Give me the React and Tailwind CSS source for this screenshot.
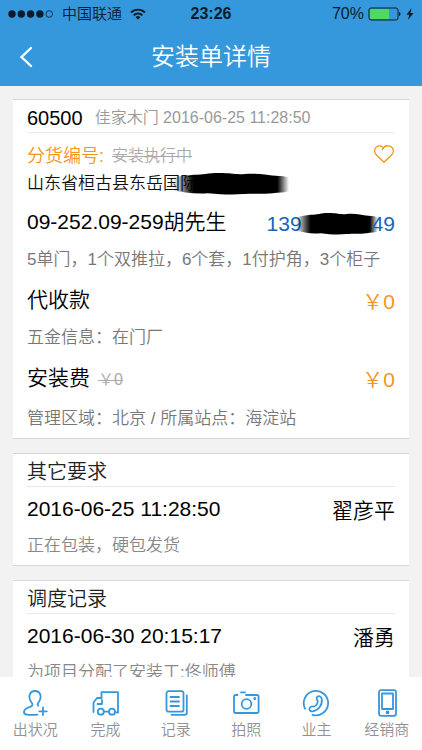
import { useState } from "react";

const ORDER = {
  id: "60500",
  brand: "佳家木门",
  createdAt: "2016-06-25 11:28:50",
  status: "安装执行中",
  address: "山东省桓古县东岳国际",
  customer: "09-252.09-259胡先生",
  phone: ["139", "49"],
  goods: "5单门，1个双推拉，6个套，1付护角，3个柜子",
};

const RECORDS = [
  { title: "其它要求", time: "2016-06-25 11:28:50", person: "翟彦平", text: "正在包装，硬包发货" },
  { title: "调度记录", time: "2016-06-30 20:15:17", person: "潘勇", text: "为项目分配了安装工:佟师傅" },
];

const TABS = [
  { id: "issue",  label: "出状况", icon: UserPlusIcon },
  { id: "done",   label: "完成",   icon: TruckIcon    },
  { id: "log",    label: "记录",   icon: NotesIcon    },
  { id: "photo",  label: "拍照",   icon: CameraIcon   },
  { id: "owner",  label: "业主",   icon: PhoneIcon    },
  { id: "dealer", label: "经销商", icon: MobileIcon   },
];

function Icon({ children }) {
  return (
    <svg
      viewBox="0 0 28 28"
      className="w-7 h-7"
      fill="none"
      stroke="currentColor"
      strokeWidth="1.8"
      strokeLinecap="round"
      strokeLinejoin="round"
      aria-hidden="true"
    >
      {children}
    </svg>
  );
}

function UserPlusIcon() {
  return (
    <Icon>
      <path d="M17.3 16.6c-.9-.7-.9-1.7 0-2.9 2-2.6 2.9-5.700 1.900-8.300C18.300 3 16.300 2 14 2s-4.300 1-5.200 3.400c-1 2.600-.1 5.700 1.900 8.300 1.300 1.700 1 3.100-1 3.900l-3.500 1.400C4 20 3 21.300 3 23.300c0 1.500 1 2.200 3 2.400 3 .3 7 .3 10.500 0" />
      <path d="M22 18.500v7.500M18.300 22.300h7.500" />
    </Icon>
  );
}

function TruckIcon() {
  return (
    <Icon>
      <path d="M2.500 23v-9.500L6 9h4.500V3.200h16.500v20.300H25.500M11 11v4H6.500" />
      <circle cx="9.800" cy="22.700" r="3" />
      <circle cx="21" cy="22.700" r="3" />
      <path d="M13.500 22.700h3.700" />
    </Icon>
  );
}

function NotesIcon() {
  return (
    <Icon>
      <rect x="4.500" y="2.200" width="17" height="20.500" rx="2" />
      <path d="M24.800 6.500v17c0 1.500-.8 2.300-2.300 2.300H9.500M8.500 8h8.500M8.500 12.500h8.500M8.500 17h8.500" />
    </Icon>
  );
}

function CameraIcon() {
  return (
    <Icon>
      <path d="M5.500 6H3.800C2.600 6 2 6.600 2 7.800v14.400c0 1.200.6 1.800 1.800 1.800h21c1.200 0 1.800-.6 1.800-1.800V7.800c0-1.200-.6-1.800-1.800-1.800H14M9 3.400h4" />
      <circle cx="14.500" cy="15" r="4.800" />
      <circle cx="22.800" cy="9.500" r=".6" fill="currentColor" />
    </Icon>
  );
}

function PhoneIcon() {
  return (
    <Icon>
      <path d="M10.500 25.800A12.200 12.200 0 1 0 3 19.500" />
      <path d="M15.300 7.800c1.500-1.300 4.200-.3 4.500 2.200.7 6-3.300 11.200-9 12.300-2 .3-3.800-1-3.300-2.800.4-1.600 2.300-2.500 3.800-1.800 2.500-.3 4.600-3 4.500-5.900-1.300-.8-1.700-2.800-.5-4z" />
    </Icon>
  );
}

function MobileIcon() {
  return (
    <Icon>
      <rect x="6" y="1.200" width="17" height="25.600" rx="2" />
      <rect x="9" y="4.500" width="11" height="15.500" />
      <circle cx="14.500" cy="23.400" r="1" fill="currentColor" />
    </Icon>
  );
}

// Black marker stroke that hides private text
function Scribble({ id, className }) {
  return (
    <svg viewBox="0 0 100 24" preserveAspectRatio="none" className={className} aria-hidden="true">
      <defs>
        <linearGradient id={id}>
          <stop offset="0" stopOpacity="0" />
          <stop offset=".14" stopOpacity=".8" />
          <stop offset=".18" stopOpacity="1" />
          <stop offset=".9" stopOpacity="1" />
          <stop offset="1" stopOpacity="0" />
        </linearGradient>
      </defs>
      <path
        d="M0 5C6 3 12 3 18 2c8 0 12-2 22-2s14 2 22 1c9-1 18 1 26 2 6 0 10 1 12 2v15c-5 2-9 1-14 2-9 1-16 0-25 1-12 1-20 0-31-1-11 1-22-1-30-3z"
        fill={`url(#${id})`}
      />
    </svg>
  );
}

function StatusBar() {
  return (
    <div className="h-7 px-2 grid grid-cols-[1fr_auto_1fr] items-center text-base text-[#0b1c2b]">
      <div className="flex items-center gap-1">
        <svg viewBox="0 0 46 8" className="w-[46px] h-2" fill="currentColor" aria-hidden="true">
          <circle cx="4" cy="4" r="3.700" />
          <circle cx="13.300" cy="4" r="3.700" />
          <circle cx="22.600" cy="4" r="3.700" />
          <circle cx="31.900" cy="4" r="3.700" />
          <circle cx="41.200" cy="4" r="3.300" fill="none" stroke="currentColor" strokeWidth=".8" />
        </svg>
        <span className="ml-1 text-[15px]">中国联通</span>
        <svg viewBox="0 0 16 12" className="w-4 h-3 ml-1" fill="none" stroke="currentColor" strokeWidth="1.900" aria-hidden="true">
          <path d="M1 4.500a10 10 0 0 1 14 0M3.600 7.300a6.200 6.200 0 0 1 8.800 0" />
          <path d="M8 11.500L5.600 9.200a3.400 3.400 0 0 1 4.800 0z" fill="currentColor" stroke="none" />
        </svg>
      </div>
      <span className="font-bold">23:26</span>
      <div className="flex items-center justify-end gap-1">
        <span>70%</span>
        <svg viewBox="0 0 34 14" className="w-[34px] h-[14px]" aria-hidden="true">
          <rect x="1" y="1" width="29" height="12" rx="2" fill="none" stroke="currentColor" />
          <rect x="2" y="2" width="19" height="10" rx="1" fill="#4cd964" />
          <path d="M31 5c2 .3 2 3.700 0 4z" fill="currentColor" />
        </svg>
        <svg viewBox="0 0 8 12" className="w-2 h-3" fill="currentColor" aria-hidden="true">
          <path d="M5.500 0L.5 6.800h2.800L2 12l5.500-7H4.500z" />
        </svg>
      </div>
    </div>
  );
}

function Card({ children }) {
  return (
    <section className="shrink-0 bg-white border-y border-[#d8d8d8] px-3.5 flex flex-col">{children}</section>
  );
}

function FeeRow({ label, old }) {
  return (
    <div className="h-9 flex items-center justify-between">
      <h3 className="text-[21px] text-black">
        {label}
        {old && <del className="ml-2 text-base text-[#aaa]">{old}</del>}
      </h3>
      <span className="pt-1 text-[21px] text-[#f7941d]">￥0</span>
    </div>
  );
}

function RecordCard({ record }) {
  return (
    <Card>
      <h2 className="h-[33px] pt-1 flex items-center border-b border-[#e8e8e8] text-xl text-[#222]">{record.title}</h2>
      <div className="h-11 flex items-center justify-between text-[21px] text-black">
        <time>{record.time}</time>
        <span className="pt-1">{record.person}</span>
      </div>
      <p className="h-[34px] text-[17px] leading-[30px] text-[#888]">{record.text}</p>
    </Card>
  );
}

export default function App() {
  const [liked, setLiked] = useState(false);

  return (
    <div
      lang="zh-CN"
      className="h-screen flex flex-col overflow-hidden bg-[#f2f2f2] font-['Liberation_Sans','Noto_Sans_CJK_SC',sans-serif] font-[350]"
    >
      <header className="shrink-0 bg-[#3598dc]">
        <StatusBar />
        <div className="h-[58px] px-4 grid grid-cols-[1fr_auto_1fr] items-center text-white">
          <button aria-label="返回" className="w-5 h-8 flex items-center justify-center">
            <svg viewBox="0 0 14 22" className="w-3.5 h-[22px]" fill="none" stroke="currentColor" strokeWidth="2.400" strokeLinecap="round" aria-hidden="true">
              <path d="M12 2L2.500 11l9.500 9" />
            </svg>
          </button>
          <h1 className="text-2xl">安装单详情</h1>
        </div>
      </header>

      <main className="flex-1 min-h-0 overflow-y-auto [scrollbar-width:none] px-[13px] pt-[13px] flex flex-col gap-3.5">
        <Card>
          <div className="h-[33px] flex items-center gap-3 border-b border-[#ececec] pt-1">
            <h2 className="text-xl text-black">{ORDER.id}</h2>
            <p className="text-base text-[#999]">{ORDER.brand} {ORDER.createdAt}</p>
          </div>

          <div className="h-[38px] pt-2 flex items-center justify-between">
            <p className="flex items-center gap-2 text-lg text-[#f7941d]">
              分货编号:
              <del className="text-base text-[#aaa]">{ORDER.status}</del>
            </p>
            <button aria-label="收藏" aria-pressed={liked} onClick={() => setLiked((v) => !v)} className="pb-1 text-[#f7941d]">
              <svg viewBox="0 0 22 20" className="w-[22px] h-5" fill={liked ? "currentColor" : "none"} stroke="currentColor" strokeWidth="1.300" strokeLinejoin="round" strokeLinecap="round" aria-hidden="true">
                <path d="M9.500 5.500C10.500 3 13 1.500 15.500 1.800c3.500.4 5.300 3.400 4.800 6.200-.2 1.100-.8 2-1.600 2.800L11 18.300 3.300 10.800C1.500 9 1.200 6.500 2.200 4.500 3.800 1.500 7.300 1.200 9.300 3" />
              </svg>
            </button>
          </div>

          <p className="h-[26px] flex items-center text-[17px] text-[#111]">
            {ORDER.address}
            <Scribble id="address-mark" className="w-[116px] h-[22px] -ml-6" />
          </p>

          <div className="h-[50px] flex items-center justify-between text-[21px]">
            <h3 className="text-black">{ORDER.customer}</h3>
            <a href="tel:139" className="flex items-center pt-1 text-[#1565c0]">
              {ORDER.phone[0]}
              <Scribble id="phone-mark" className="w-[82px] h-[22px] -mx-1.5" />
              {ORDER.phone[1]}
            </a>
          </div>

          <p className="h-[35px] text-[17px] leading-[26px] text-[#777]">{ORDER.goods}</p>
          <FeeRow label="代收款" />
          <p className="h-[42px] pt-2 text-[17px] leading-6 text-[#777]">五金信息：在门厂</p>
          <FeeRow label="安装费" old="￥0" />
          <p className="h-[42px] pt-2 text-[17px] leading-[30px] text-[#777]">管理区域：北京 / 所属站点：海淀站</p>
        </Card>

        {RECORDS.map((record) => (
          <RecordCard key={record.title} record={record} />
        ))}
      </main>

      <nav className="shrink-0 h-[73px] pt-3 grid grid-cols-6 bg-white">
        {TABS.map((tab) => (
          <button key={tab.id} className="flex flex-col items-center text-[#3598dc]">
            <tab.icon />
            <span className="text-[15px] leading-[26px] text-[#929292]">{tab.label}</span>
          </button>
        ))}
      </nav>
    </div>
  );
}
